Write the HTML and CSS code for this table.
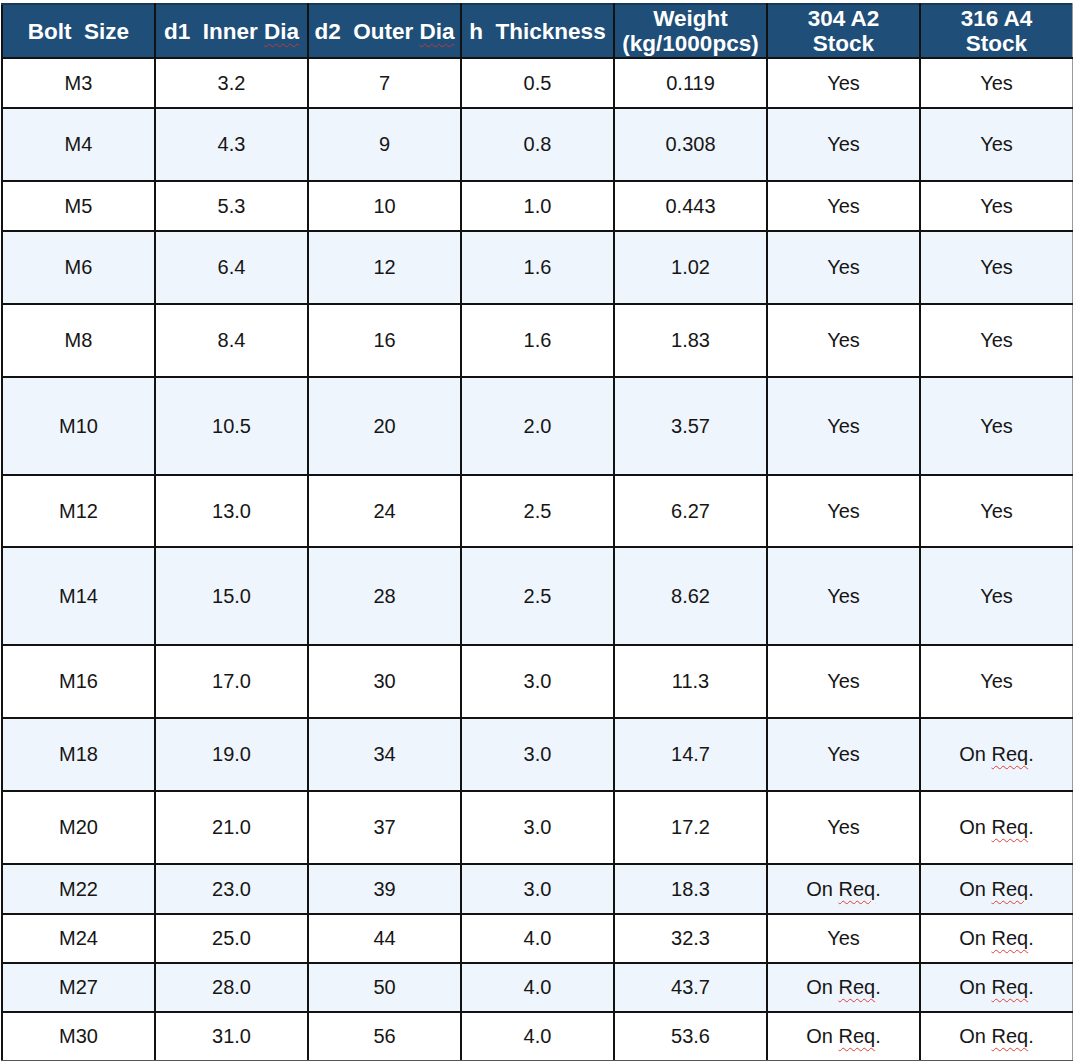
FILE: index.html
```html
<!DOCTYPE html>
<html>
<head>
<meta charset="utf-8">
<link rel="stylesheet" href="styles.css">
</head>
<body>
<table class="spec">
  <colgroup>
    <col class="c"><col class="c"><col class="c"><col class="c"><col class="c"><col class="c"><col class="c">
  </colgroup>
  <thead>
    <tr class="head">
      <th>Bolt&nbsp; Size</th>
      <th>d1&nbsp; Inner <span class="sp">Dia</span></th>
      <th>d2&nbsp; Outer <span class="sp">Dia</span></th>
      <th>h&nbsp; Thickness</th>
      <th>Weight<br>(kg/1000pcs)</th>
      <th>304 A2<br>Stock</th>
      <th>316 A4<br>Stock</th>
    </tr>
  </thead>
  <tbody>
    <tr class="r50"><td>M3</td><td>3.2</td><td>7</td><td>0.5</td><td>0.119</td><td>Yes</td><td>Yes</td></tr>
    <tr class="r73 alt"><td>M4</td><td>4.3</td><td>9</td><td>0.8</td><td>0.308</td><td>Yes</td><td>Yes</td></tr>
    <tr class="r50"><td>M5</td><td>5.3</td><td>10</td><td>1.0</td><td>0.443</td><td>Yes</td><td>Yes</td></tr>
    <tr class="r73 alt"><td>M6</td><td>6.4</td><td>12</td><td>1.6</td><td>1.02</td><td>Yes</td><td>Yes</td></tr>
    <tr class="r73"><td>M8</td><td>8.4</td><td>16</td><td>1.6</td><td>1.83</td><td>Yes</td><td>Yes</td></tr>
    <tr class="r98 alt"><td>M10</td><td>10.5</td><td>20</td><td>2.0</td><td>3.57</td><td>Yes</td><td>Yes</td></tr>
    <tr class="r72"><td>M12</td><td>13.0</td><td>24</td><td>2.5</td><td>6.27</td><td>Yes</td><td>Yes</td></tr>
    <tr class="r98 alt"><td>M14</td><td>15.0</td><td>28</td><td>2.5</td><td>8.62</td><td>Yes</td><td>Yes</td></tr>
    <tr class="r73"><td>M16</td><td>17.0</td><td>30</td><td>3.0</td><td>11.3</td><td>Yes</td><td>Yes</td></tr>
    <tr class="r73 alt"><td>M18</td><td>19.0</td><td>34</td><td>3.0</td><td>14.7</td><td>Yes</td><td>On <span class="sp">Req</span>.</td></tr>
    <tr class="r73"><td>M20</td><td>21.0</td><td>37</td><td>3.0</td><td>17.2</td><td>Yes</td><td>On <span class="sp">Req</span>.</td></tr>
    <tr class="r50 alt"><td>M22</td><td>23.0</td><td>39</td><td>3.0</td><td>18.3</td><td>On <span class="sp">Req</span>.</td><td>On <span class="sp">Req</span>.</td></tr>
    <tr class="r49"><td>M24</td><td>25.0</td><td>44</td><td>4.0</td><td>32.3</td><td>Yes</td><td>On <span class="sp">Req</span>.</td></tr>
    <tr class="r49 alt"><td>M27</td><td>28.0</td><td>50</td><td>4.0</td><td>43.7</td><td>On <span class="sp">Req</span>.</td><td>On <span class="sp">Req</span>.</td></tr>
    <tr class="r49"><td>M30</td><td>31.0</td><td>56</td><td>4.0</td><td>53.6</td><td>On <span class="sp">Req</span>.</td><td>On <span class="sp">Req</span>.</td></tr>
  </tbody>
</table>
</body>
</html>
```

FILE: styles.css
```css
html, body {
  margin: 0;
  background: #ffffff;
}
body {
  padding: 3px 0 0 1px;
  font-family: "Liberation Sans", Arial, sans-serif;
}
.spec {
  width: 1072px;
  table-layout: fixed;
  border-collapse: collapse;
}
.spec .c {
  width: 153px;
}
.spec th,
.spec td {
  border: 2px solid #121212;
  text-align: center;
  vertical-align: middle;
  padding: 0;
  overflow: hidden;
  white-space: nowrap;
}
.head th {
  height: 52px;
  background: #1f4e79;
  color: #ffffff;
  font-weight: bold;
  font-size: 22.5px;
  line-height: 25px;
  border-top-color: #17395a;
}
.spec td {
  font-size: 20px;
  color: #161616;
  background: #ffffff;
}
.spec tr.alt td {
  background: #eff5fc;
}
.spec tbody tr:last-child td {
  border-bottom-color: #555555;
}
.spec td:last-child,
.spec th:last-child {
  border-right-color: #9a9a9a;
}
.r49 { height: 49px; }
.r50 { height: 50px; }
.r72 { height: 72px; }
.r73 { height: 73px; }
.r98 { height: 98px; }
.sp {
  text-decoration: underline wavy #e0403a;
  text-decoration-thickness: 1px;
  text-underline-offset: 4px;
}
.head .sp {
  text-decoration-color: #c0393b;
}
```
